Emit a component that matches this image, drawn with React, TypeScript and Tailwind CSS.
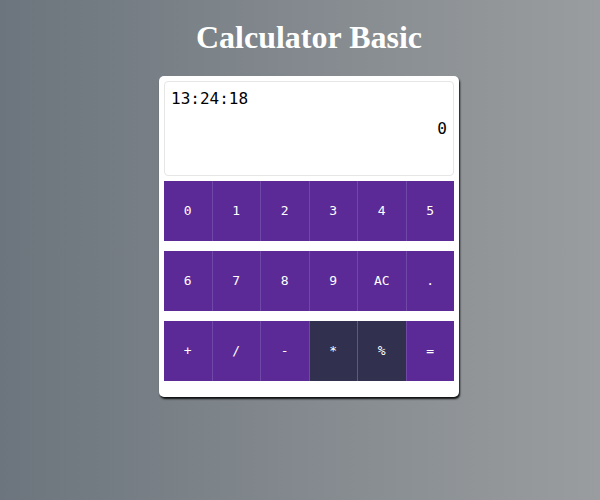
import React from "react";

const rows: { label: string; dark?: boolean }[][] = [
  [{ label: "0" }, { label: "1" }, { label: "2" }, { label: "3" }, { label: "4" }, { label: "5" }],
  [{ label: "6" }, { label: "7" }, { label: "8" }, { label: "9" }, { label: "AC" }, { label: "." }],
  [{ label: "+" }, { label: "/" }, { label: "-" }, { label: "*", dark: true }, { label: "%", dark: true }, { label: "=" }],
];

export default function App() {
  return (
    <div className="w-[600px] h-[500px] pl-[18px] bg-[linear-gradient(to_right,#6c757d,#9a9d9f)] flex flex-col items-center">
      <h1 className="mt-[18px] text-white text-[32px] font-bold leading-[38px] font-['Liberation_Serif',serif]">
        Calculator Basic
      </h1>
      <div className="mt-[20px] w-[300px] bg-white rounded-[5px] shadow-[1px_2px_2px_rgba(0,0,0,0.9)] px-[5px] pt-[5px] pb-[16px] flex flex-col gap-[5px]">
        <div className="h-[95px] border border-[#e6e6e6] rounded-[4px] px-[6px] pt-[7px] font-['DejaVu_Sans_Mono',monospace] text-black text-[16px] leading-[20px]">
          <div>13:24:18</div>
          <div className="text-right mt-[10px]">0</div>
        </div>
        <div className="flex flex-col gap-[10px]">
          {rows.map((row, i) => (
            <div key={i} className="flex h-[60px]">
              {row.map((b, j) => (
                <div
                  key={j}
                  className={`flex-1 flex items-center justify-center text-white text-[13px] font-['DejaVu_Sans_Mono',monospace] ${
                    b.dark ? "bg-[#31304e]" : "bg-[#5b2a96]"
                  } ${j > 0 ? "border-l border-[#6f48a8]" : ""}`}
                >
                  {b.label}
                </div>
              ))}
            </div>
          ))}
        </div>
      </div>
    </div>
  );
}
